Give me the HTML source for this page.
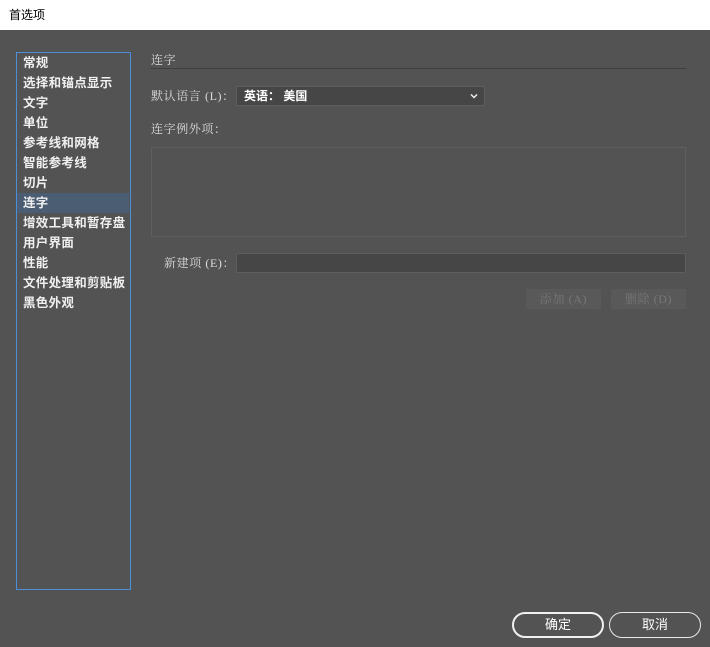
<!DOCTYPE html>
<html><head><meta charset="utf-8"><style>
body{margin:0;width:710px;height:647px;background:#535353;position:relative;overflow:hidden;font-family:"Liberation Sans","Noto Sans CJK SC",sans-serif;font-size:12px;color:#ddd}
div{position:absolute;box-sizing:border-box}
.t{white-space:nowrap;line-height:20px}
.s{font-family:"Liberation Serif","Noto Serif CJK SC",serif;letter-spacing:0.6px}
</style></head><body>
<div style="left:0;top:0;width:710px;height:30px;background:#fff;color:#000;font-size:12px;line-height:30px;padding-left:9px">首选项</div>
<div style="left:16px;top:52px;width:115px;height:538px;border:1px solid #4a8fd8;background:#535353"></div>
<div style="left:17px;top:193px;width:112px;height:20px;background:#4b5d72"></div>
<div class="t" style="left:23px;top:53px;color:#f0f0f0;font-weight:bold;font-size:12.5px;line-height:20px;letter-spacing:0.3px">常规<br>选择和锚点显示<br>文字<br>单位<br>参考线和网格<br>智能参考线<br>切片<br>连字<br>增效工具和暂存盘<br>用户界面<br>性能<br>文件处理和剪贴板<br>黑色外观</div>
<div class="t s" style="left:151px;top:50px">连字</div>
<div style="left:151px;top:68px;width:535px;height:1px;background:#3f3f3f"></div>
<div class="t s" style="left:151px;top:86px">默认语言 (L)：</div>
<div style="left:236px;top:86px;width:249px;height:20px;background:#464646;border:1px solid #5e5e5e;border-radius:2px;color:#fff;padding-left:7px;line-height:18px;font-weight:bold">英语： 美国<svg style="position:absolute;right:6px;top:6px" width="8" height="6" viewBox="0 0 8 6"><path d="M1 1.5L4 4.5L7 1.5" stroke="#eee" stroke-width="1.5" fill="none"/></svg></div>
<div class="t s" style="left:151px;top:119px">连字例外项：</div>
<div style="left:151px;top:147px;width:535px;height:90px;border:1px solid #5f5f5f;background:#535353"></div>
<div class="t s" style="left:164px;top:253px">新建项 (E)：</div>
<div style="left:236px;top:253px;width:450px;height:20px;background:#464646;border:1px solid #5e5e5e;border-radius:2px"></div>
<div class="s" style="left:526px;top:289px;width:75px;height:20px;background:#595959;color:#777;text-align:center;line-height:20px">添加 (A)</div>
<div class="s" style="left:611px;top:289px;width:75px;height:20px;background:#595959;color:#777;text-align:center;line-height:20px">删除 (D)</div>
<div style="left:512px;top:612px;width:92px;height:26px;border:2px solid #f0f0f0;border-radius:13px;color:#fff;text-align:center;line-height:22px;font-size:13px">确定</div>
<div style="left:609px;top:612px;width:92px;height:26px;border:1.5px solid #e8e8e8;border-radius:13px;color:#fff;text-align:center;line-height:23px;font-size:13px">取消</div>
</body></html>
